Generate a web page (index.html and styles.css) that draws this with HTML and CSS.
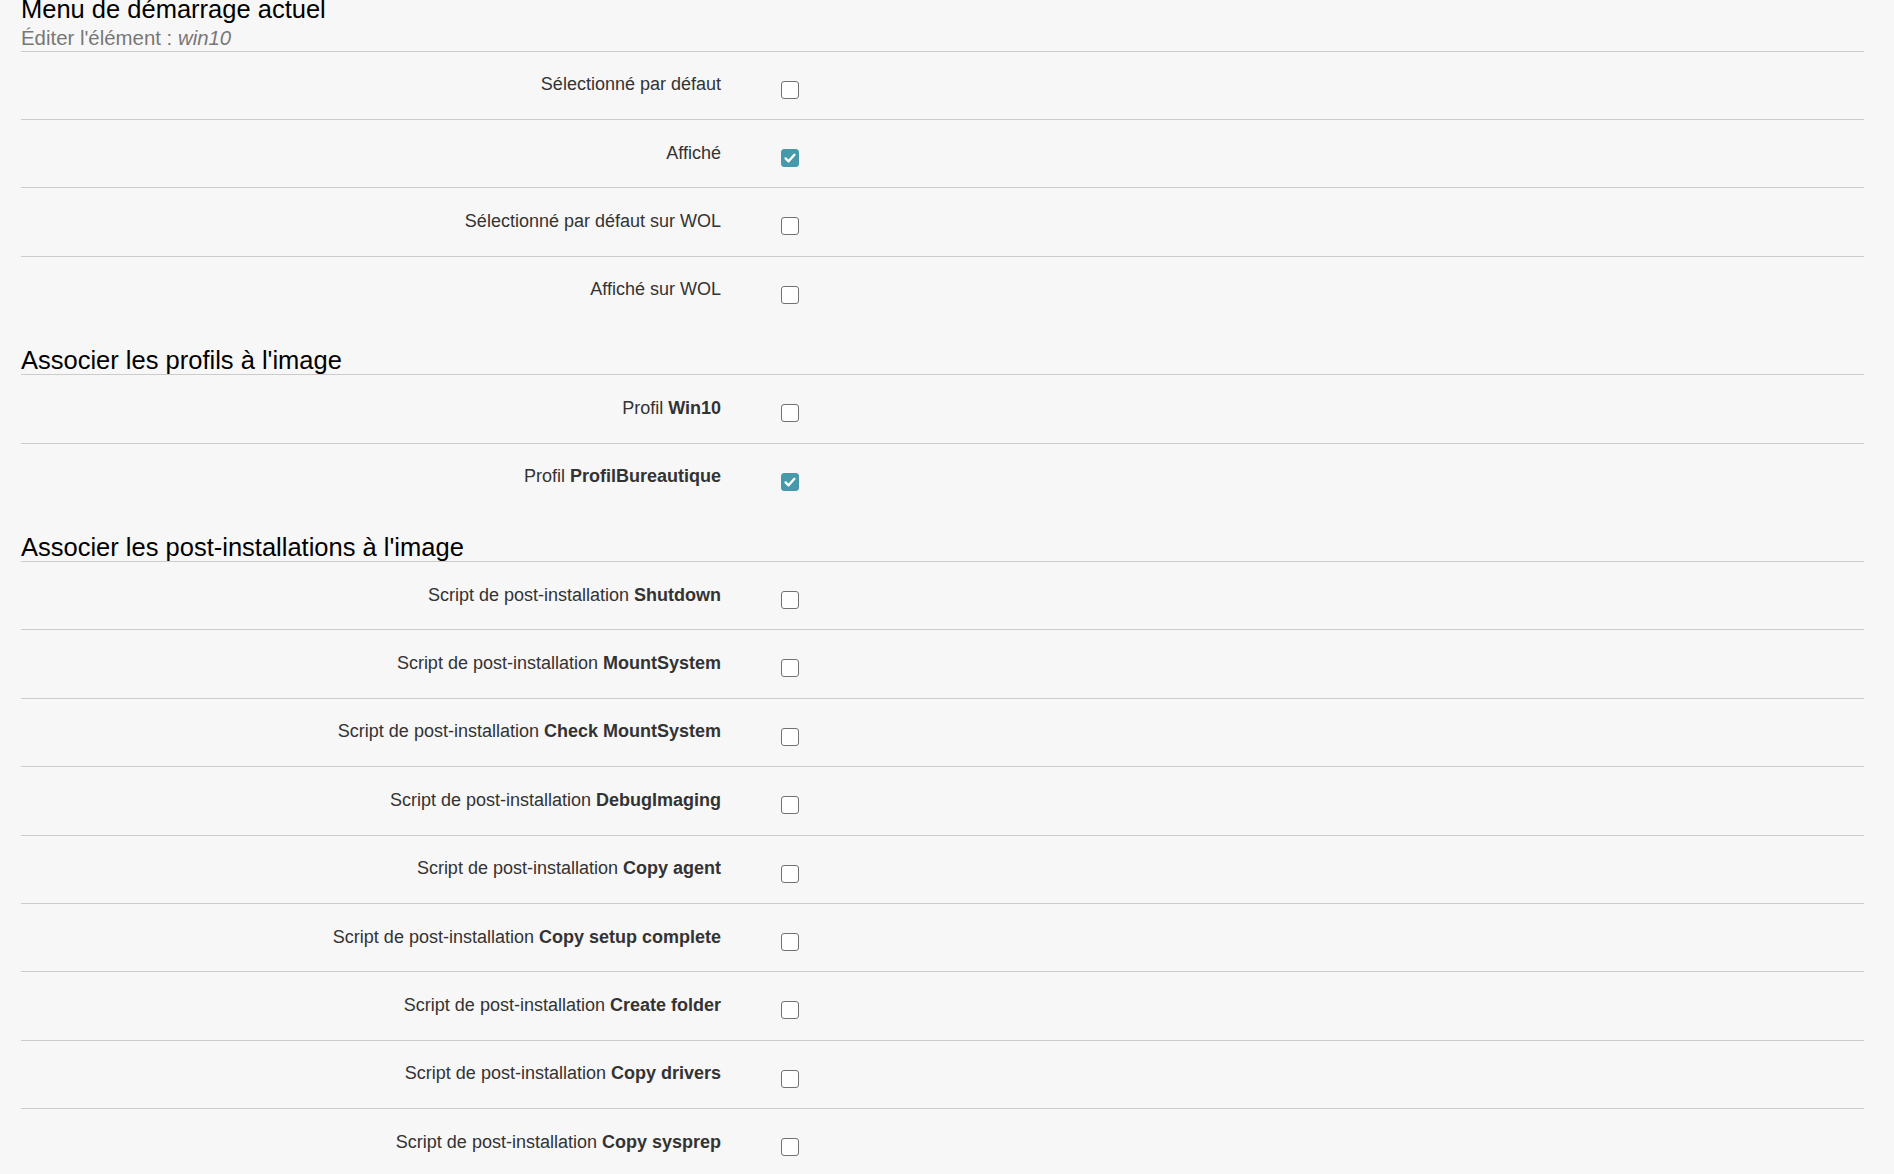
FILE: index.html
```html
<!DOCTYPE html>
<html lang="fr">
<head>
<meta charset="utf-8">
<title>Menu de démarrage actuel</title>
<link rel="stylesheet" href="styles.css">
</head>
<body>
<div class="page">
  <h3 class="section-title first">Menu de démarrage actuel<br><small>Éditer l'élément : <i>win10</i></small></h3>
  <div class="row"><label class="label">Sélectionné par défaut</label><span class="check"></span></div>
  <div class="row"><label class="label">Affiché</label><span class="check checked"><svg viewBox="0 0 16 16"><path d="M3.6 8.4 6.6 11.3 12.4 4.8" /></svg></span></div>
  <div class="row"><label class="label">Sélectionné par défaut sur WOL</label><span class="check"></span></div>
  <div class="row"><label class="label">Affiché sur WOL</label><span class="check"></span></div>

  <h3 class="section-title">Associer les profils à l'image</h3>
  <div class="row"><label class="label">Profil <b>Win10</b></label><span class="check"></span></div>
  <div class="row"><label class="label">Profil <b>ProfilBureautique</b></label><span class="check checked"><svg viewBox="0 0 16 16"><path d="M3.6 8.4 6.6 11.3 12.4 4.8" /></svg></span></div>

  <h3 class="section-title">Associer les post-installations à l'image</h3>
  <div class="row"><label class="label">Script de post-installation <b>Shutdown</b></label><span class="check"></span></div>
  <div class="row"><label class="label">Script de post-installation <b>MountSystem</b></label><span class="check"></span></div>
  <div class="row"><label class="label">Script de post-installation <b>Check MountSystem</b></label><span class="check"></span></div>
  <div class="row"><label class="label">Script de post-installation <b>DebugImaging</b></label><span class="check"></span></div>
  <div class="row"><label class="label">Script de post-installation <b>Copy agent</b></label><span class="check"></span></div>
  <div class="row"><label class="label">Script de post-installation <b>Copy setup complete</b></label><span class="check"></span></div>
  <div class="row"><label class="label">Script de post-installation <b>Create folder</b></label><span class="check"></span></div>
  <div class="row"><label class="label">Script de post-installation <b>Copy drivers</b></label><span class="check"></span></div>
  <div class="row"><label class="label">Script de post-installation <b>Copy sysprep</b></label><span class="check"></span></div>
</div>
</body>
</html>
```
FILE: styles.css
```css
html, body {
  margin: 0;
  padding: 0;
  background: #f7f7f7;
  overflow: hidden;
}
body {
  font-family: "Liberation Sans", Arial, sans-serif;
  color: #333;
}
.page {
  margin: 0 30px 0 21px;
}
.section-title {
  margin: 22px 0 0 0;
  font-size: 25.5px;
  font-weight: normal;
  line-height: 28.05px;
  color: #000;
  border-bottom: 1px solid #ccc;
}
.section-title.first {
  margin-top: -4.2px;
  line-height: 27.4px;
}
.section-title small {
  font-size: 20.4px;
  line-height: 20px;
  color: #777;
}
.section-title small i {
  font-style: italic;
}
.row {
  display: flex;
  align-items: flex-start;
  height: 67.4px;
  border-top: 1px solid #ccc;
}
.section-title + .row {
  border-top: none;
}
.label {
  width: 700px;
  flex: none;
  text-align: right;
  font-size: 18px;
  line-height: 25.7px;
  padding-top: 20.6px;
  color: #333;
}
.label b {
  font-weight: bold;
}
.check {
  flex: none;
  box-sizing: border-box;
  width: 18px;
  height: 18px;
  margin-left: 60px;
  margin-top: 29px;
  border: 1.3px solid #727272;
  border-radius: 3px;
  background: #fff;
  display: flex;
  align-items: center;
  justify-content: center;
}
.check.checked {
  background: #4599ab;
  border-color: #4599ab;
}
.check svg {
  width: 16px;
  height: 16px;
}
.check svg path {
  fill: none;
  stroke: #fff;
  stroke-width: 2.4;
  stroke-linecap: round;
  stroke-linejoin: round;
}
```
